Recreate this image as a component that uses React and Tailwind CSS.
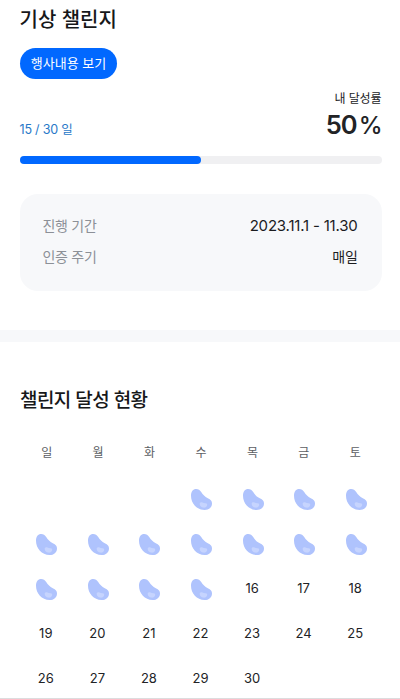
import clsx from "clsx";

const WEEKDAYS = ['일', '월', '화', '수', '목', '금', '토'];
const FIRST_WEEKDAY = 3; // 2023.11.1 is a Wednesday
const TOTAL_DAYS = 30;
const DONE_DAYS = 15;

function Bean() {
    return (
        <svg width="21" height="21" viewBox="0 0 21 21" className="ml-0.5 mt-px">
            <path
                d="M5.2 0C7.4 0 8.9 1.1 10.2 3C12 5.8 13.8 7.8 16.8 9.2C19.8 10.6 21 12 21 14.4C21 18.4 17.8 21 13.6 21C5.8 21 0 14.4 0 6.8C0 2.6 2 0 5.2 0Z"
                fill="#afc3fd"
            />
            <path
                d="M8.7 15.2C8.4 13.5 9.6 12.8 11 13.3C12.3 13.8 13.2 14.3 14.5 14.2C16 14.1 16.6 15.4 16 16.7C15.3 18.3 13.8 18.9 12.2 18.6C10.3 18.2 9 17 8.7 15.2Z"
                fill="#c6d4fe"
            />
        </svg>
    );
}

function InfoRow({ label, value, className }) {
    return (
        <div className="flex h-[31px] items-center justify-between text-[14px] tracking-[-0.3px]">
            <span className="text-[#8c9097]">{label}</span>
            <span className={clsx('mr-px text-[#1b1c1f]', className)}>{value}</span>
        </div>
    );
}

function Calendar() {
    const cells = [
        ...Array(FIRST_WEEKDAY).fill(null),
        ...Array.from({ length: TOTAL_DAYS }, (_, i) => i + 1)
    ];

    return (
        <div className="mt-[28px]">
            <div className="grid grid-cols-7 pl-px text-center text-[12px] leading-5 text-[#5c5e63]">
                {WEEKDAYS.map((day) => (
                    <span key={day}>{day}</span>
                ))}
            </div>
            <div className="mt-[14px] grid auto-rows-[44.7px] grid-cols-7 text-[13px] text-[#222326]">
                {cells.map((day, i) => (
                    <div key={i} className="flex items-center justify-center">
                        {day && (day <= DONE_DAYS ? <Bean /> : <span className="pt-px">{day}</span>)}
                    </div>
                ))}
            </div>
        </div>
    );
}

function App() {
    const rate = (DONE_DAYS / TOTAL_DAYS) * 100;

    return (
        <div className="flex h-[699px] w-[400px] flex-col overflow-hidden border-b border-[#dcdcde] bg-white font-['Inter','Noto_Sans_CJK_KR',sans-serif]">
            <section className="pl-[19.5px] pr-[18.5px] pt-[5px]">
                <h1 className="text-[20px] font-medium leading-[30px] text-[#17181a]">기상 챌린지</h1>
                <button className="mt-[13px] flex h-[31px] w-[97px] items-center justify-center rounded-full bg-[#0168ff] pl-px text-[13px] text-white">
                    행사내용 보기
                </button>

                <div className="mt-[10px] flex items-end justify-between">
                    <p className="pb-px text-[12.5px] leading-5 tracking-[-0.2px] text-[#2878c8]">15 / 30 일</p>
                    <div className="text-right text-[#222326]">
                        <p className="text-[12px] leading-5 tracking-[-0.1px]">내 달성률</p>
                        <p className="h-8 text-[25.5px] font-semibold leading-8 tracking-[-1px]">
                            {rate}
                            <span className="ml-0.5 text-[24px] font-medium">%</span>
                        </p>
                    </div>
                </div>
                <div className="mt-[15px] h-2 rounded-full bg-[#f0f0f2]">
                    <div className="h-2 rounded-full bg-[#0168ff]" style={{ width: `${rate}%` }}></div>
                </div>

                <div className="mt-[30px] h-[97px] rounded-[18px] bg-[#f7f8fa] px-[23px] pt-4">
                    <InfoRow label="진행 기간" value="2023.11.1 - 11.30" className="pt-0.5 text-[15px] tracking-[-0.2px]" />
                    <InfoRow label="인증 주기" value="매일" />
                </div>
            </section>

            <div className="mt-[39px] h-3 shrink-0 bg-[#f7f8fa]"></div>

            <section className="pl-5 pr-[19px] pt-[45px]">
                <h2 className="text-[19px] font-medium leading-7 tracking-[-0.55px] text-[#17181a]">챌린지 달성 현황</h2>
                <Calendar />
            </section>
        </div>
    );
}

export default App;
